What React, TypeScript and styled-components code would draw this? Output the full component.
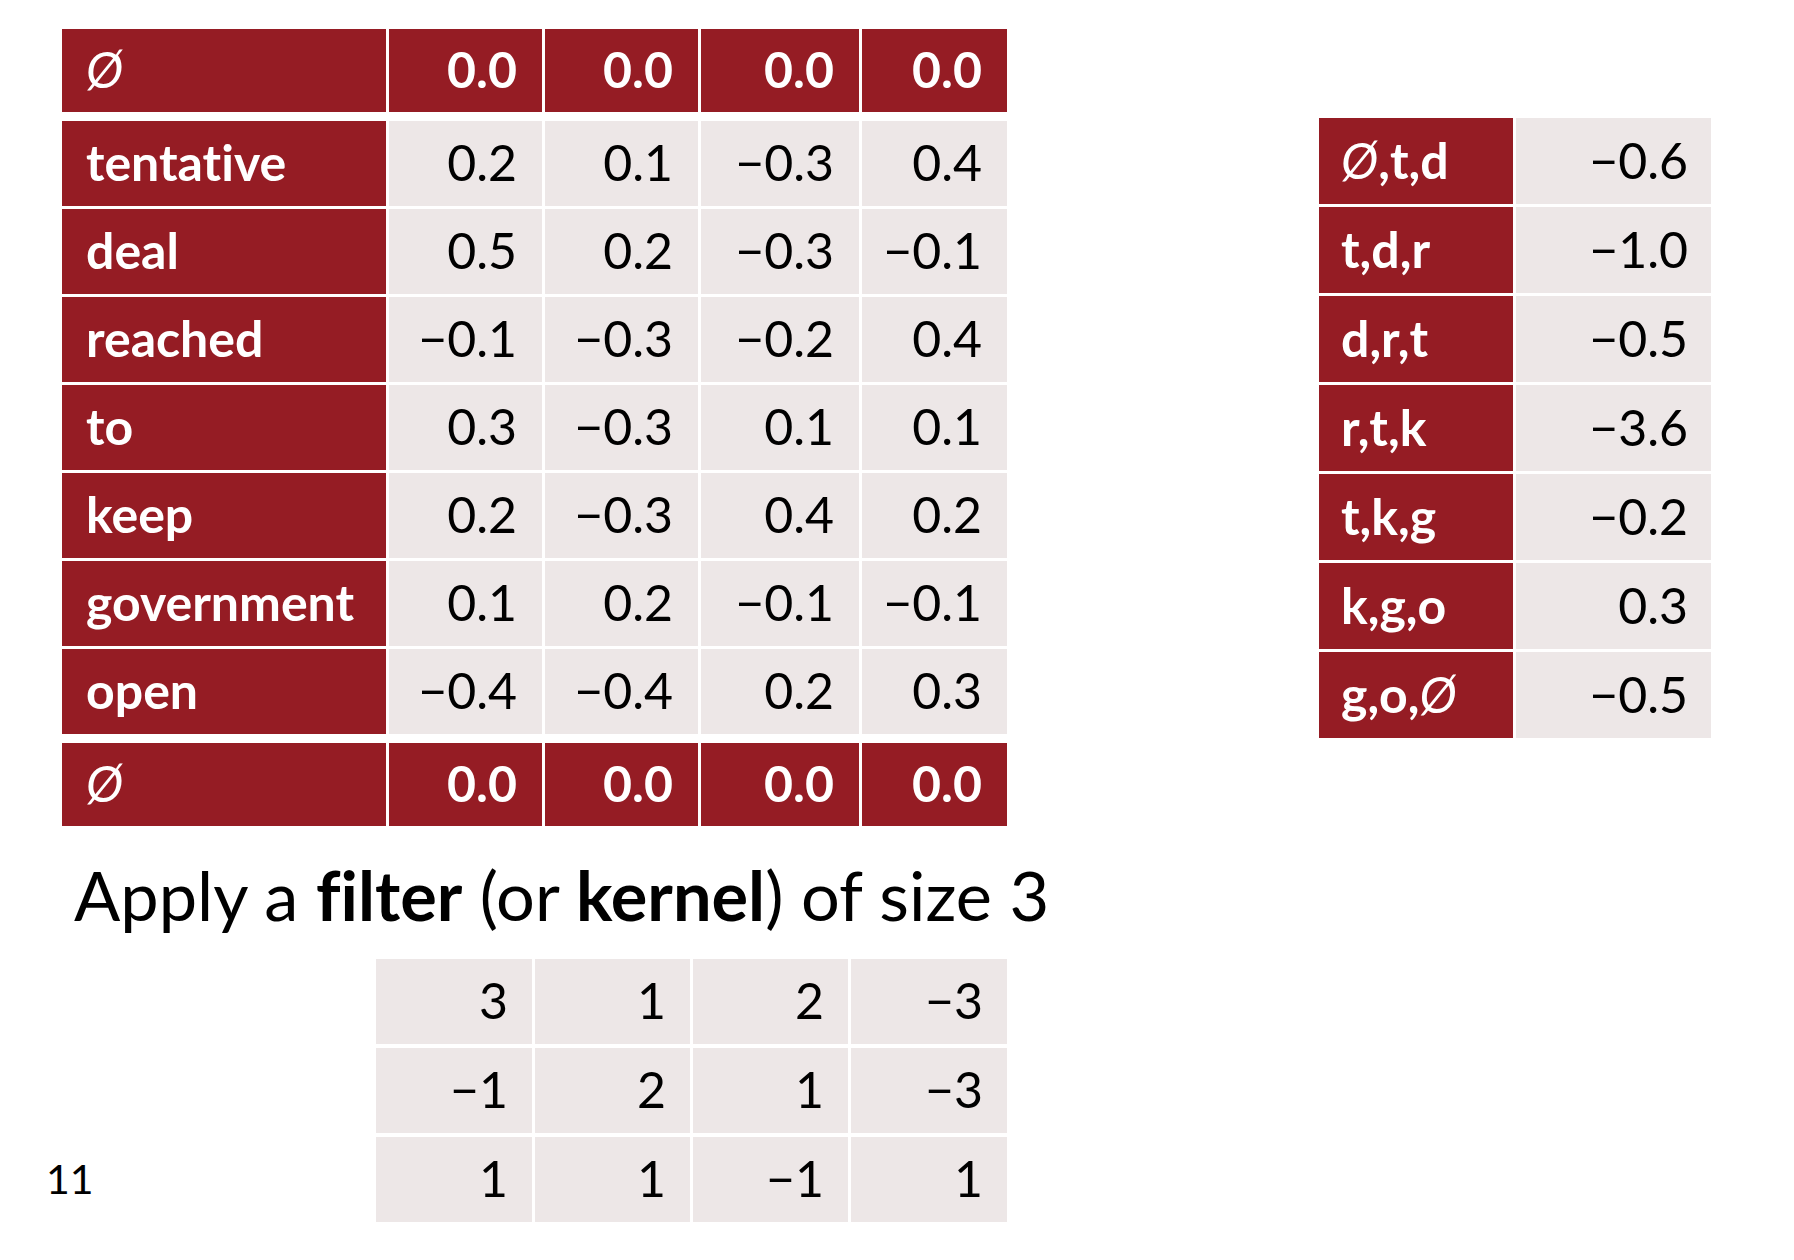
import React from "react";
import styled, { createGlobalStyle } from "styled-components";

const RED = "#951c24";
const GREY = "#ede7e7";
const FONT = `Lato, "Open Sans", "Liberation Sans", sans-serif`;

const Global = createGlobalStyle`
  html, body { margin: 0; padding: 0; background: #ffffff; }
  body { font-family: ${FONT}; font-variant-ligatures: none; }
`;

const Slide = styled.div`
  width: 1794px;
  height: 1260px;
  box-sizing: border-box;
  padding: 29px 0 0 46px;
  display: flex;
  flex-direction: column;
  background: #ffffff;
  overflow: hidden;
`;

const TopRow = styled.div`
  display: flex;
  align-items: flex-start;
  margin-left: 16px;
`;

const Matrix = styled.div`
  display: flex;
  flex-direction: column;
  gap: 9px;
`;

const MatrixSection = styled.div<{ $rowH: number }>`
  display: grid;
  grid-template-columns: 324px 153px 153px 158px 145px;
  grid-auto-rows: ${(p) => p.$rowH}px;
  column-gap: 3px;
  row-gap: 3px;
`;

const Cell = styled.div<{ $tone: "red" | "grey"; $align: "left" | "right"; $bold?: boolean; $pad?: number }>`
  display: flex;
  align-items: center;
  justify-content: ${(p) => (p.$align === "left" ? "flex-start" : "flex-end")};
  background: ${(p) => (p.$tone === "red" ? RED : GREY)};
  color: ${(p) => (p.$tone === "red" ? "#ffffff" : "#000000")};
  font-family: ${FONT};
  font-size: 50px;
  font-weight: ${(p) => (p.$bold ? 700 : 400)};
  font-variant-ligatures: none;
  line-height: 1;
  white-space: nowrap;
  padding: ${(p) => (p.$align === "left" ? `0 0 3px ${p.$pad ?? 24}px` : `0 ${p.$pad ?? 25}px 3px 0`)};
  box-sizing: border-box;
`;

const Null = styled.span`
  font-weight: 400;
  font-style: italic;
`;

const SideTable = styled.div`
  display: grid;
  grid-template-columns: 194px 195px;
  grid-auto-rows: 86px;
  column-gap: 3px;
  row-gap: 3px;
  margin-left: 312px;
  margin-top: 89px;
`;

const Caption = styled.div`
  margin: 29px 0 0 28px;
  font-family: ${FONT};
  font-size: 68.5px;
  line-height: 80px;
  color: #000000;
  white-space: nowrap;
  height: 80px;
`;

const Strong = styled.b`
  font-weight: 700;
`;

const BottomRow = styled.div`
  display: flex;
  align-items: flex-end;
  margin-top: 24px;
`;

const PageNumber = styled.div`
  width: 330px;
  height: 85px;
  display: flex;
  align-items: center;
  font-family: ${FONT};
  font-size: 41px;
  color: #000000;
  padding-bottom: 2px;
  box-sizing: border-box;
`;

const KernelGrid = styled.div`
  display: grid;
  grid-template-columns: 156px 155px 155px 156px;
  grid-auto-rows: 85px;
  column-gap: 3px;
  row-gap: 4px;
`;

const M = "\u2212";

const body: string[][] = [
  ["tentative", "0.2", "0.1", `${M}0.3`, "0.4"],
  ["deal", "0.5", "0.2", `${M}0.3`, `${M}0.1`],
  ["reached", `${M}0.1`, `${M}0.3`, `${M}0.2`, "0.4"],
  ["to", "0.3", `${M}0.3`, "0.1", "0.1"],
  ["keep", "0.2", `${M}0.3`, "0.4", "0.2"],
  ["government", "0.1", "0.2", `${M}0.1`, `${M}0.1`],
  ["open", `${M}0.4`, `${M}0.4`, "0.2", "0.3"],
];

const side: [React.ReactNode, string][] = [
  [<><Null>Ø</Null>,t,d</>, `${M}0.6`],
  ["t,d,r", `${M}1.0`],
  ["d,r,t", `${M}0.5`],
  ["r,t,k", `${M}3.6`],
  ["t,k,g", `${M}0.2`],
  ["k,g,o", "0.3"],
  [<>g,o,<Null>Ø</Null></>, `${M}0.5`],
];

const kernel: string[][] = [
  ["3", "1", "2", `${M}3`],
  [`${M}1`, "2", "1", `${M}3`],
  ["1", "1", `${M}1`, "1"],
];

const PadRow: React.FC<{ h: number }> = ({ h }) => (
  <MatrixSection $rowH={h}>
    <Cell $tone="red" $align="left">
      <Null>Ø</Null>
    </Cell>
    {[0, 1, 2, 3].map((i) => (
      <Cell key={i} $tone="red" $align="right" $bold>
        0.0
      </Cell>
    ))}
  </MatrixSection>
);

export default function App() {
  return (
    <>
      <Global />
      <Slide>
        <TopRow>
          <Matrix>
            <PadRow h={83} />
            <MatrixSection $rowH={85}>
              {body.map((row) =>
                row.map((v, i) =>
                  i === 0 ? (
                    <Cell key={row[0] + i} $tone="red" $align="left" $bold>
                      {v}
                    </Cell>
                  ) : (
                    <Cell key={row[0] + i} $tone="grey" $align="right">
                      {v}
                    </Cell>
                  )
                )
              )}
            </MatrixSection>
            <PadRow h={83} />
          </Matrix>
          <SideTable>
            {side.map(([label, value], i) => (
              <React.Fragment key={i}>
                <Cell $tone="red" $align="left" $bold $pad={22}>
                  {label}
                </Cell>
                <Cell $tone="grey" $align="right" $pad={23}>
                  {value}
                </Cell>
              </React.Fragment>
            ))}
          </SideTable>
        </TopRow>
        <Caption>
          Apply a <Strong>filter</Strong> (or <Strong>kernel</Strong>) of size 3
        </Caption>
        <BottomRow>
          <PageNumber>11</PageNumber>
          <KernelGrid>
            {kernel.map((row, r) =>
              row.map((v, c) => (
                <Cell key={`${r}-${c}`} $tone="grey" $align="right" $pad={24}>
                  {v}
                </Cell>
              ))
            )}
          </KernelGrid>
        </BottomRow>
      </Slide>
    </>
  );
}
